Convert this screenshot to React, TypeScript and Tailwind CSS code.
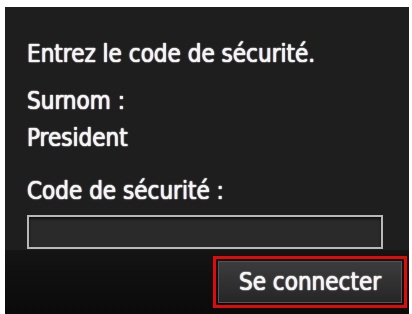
export default function App() {
  const line = 'text-[24px] leading-[28px] [text-shadow:0_0_1px_#fff,0_0_1px_#fff,0_0_2px_rgba(255,255,255,0.4)]';
  return (
    <div className="w-[412px] h-[314px] bg-white pl-[5px] pt-[7px] pr-[3px] overflow-hidden">
      <div
        className="h-full bg-[#1e1e1e] flex flex-col text-[#f4f4f4]"
        style={{ fontFamily: '"DejaVu Sans Condensed", "DejaVu Sans", sans-serif' }}
      >
        <div className="flex flex-col pl-[22px] pr-[26px] pt-[33px]">
          <p className={line}>Entrez le code de sécurité.</p>
          <p className={`mt-[19px] ${line}`}>Surnom :</p>
          <p className={`mt-[9px] ${line}`}>President</p>
          <p className={`mt-[25px] ${line}`}>Code de sécurité :</p>
          <div className="mt-[10px] h-[34px] border-2 border-[#b8b8b8] bg-[#2a2a2a] shadow-[inset_0_2px_3px_rgba(0,0,0,0.6)]" />
        </div>
        <div className="mt-[1px] flex-1 bg-gradient-to-b from-[#141414] to-[#0a0a0a] flex justify-end items-start pt-[6px] pr-[2px]">
          <button className="w-[194px] h-[52px] border-[3px] border-[#e10a0a] p-[2px]">
            <span
              className={`flex h-full w-full items-center justify-center bg-gradient-to-b from-[#3c3c3c] to-[#262626] border border-[#555] text-[#f4f4f4] ${line}`}
            >
              Se connecter
            </span>
          </button>
        </div>
      </div>
    </div>
  );
}
